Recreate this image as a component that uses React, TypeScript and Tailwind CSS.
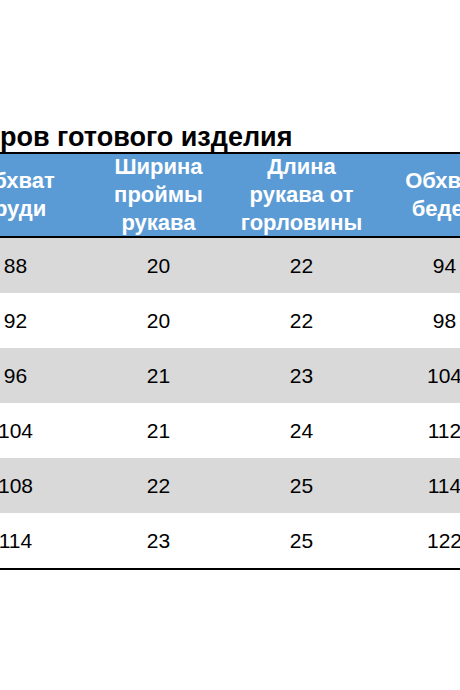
const header = [
  ["Обхват", "груди"],
  ["Ширина", "проймы", "рукава"],
  ["Длина", "рукава от", "горловины"],
  ["Обхват", "бедер"],
];

const rows = [
  ["88", "20", "22", "94"],
  ["92", "20", "22", "98"],
  ["96", "21", "23", "104"],
  ["104", "21", "24", "112"],
  ["108", "22", "25", "114"],
  ["114", "23", "25", "122"],
];

export default function App() {
  return (
    <div className="w-[460px] h-[690px] overflow-hidden bg-white pt-[124px] font-['Liberation_Sans',Arial,sans-serif] text-black">
      <div className="h-[27px] text-[27px] leading-[27px] font-bold whitespace-nowrap">
        ров готового изделия
      </div>
      <div className="mt-[1px] ml-[-56px] w-[572px] border-t-2 border-b-2 border-black">
        <div className="flex h-[84px] bg-[#5b9bd5] border-b-2 border-black">
          {header.map((lines, i) => (
            <div
              key={i}
              className="w-[143px] shrink-0 flex flex-col items-center justify-center text-white font-bold text-[22px] leading-[28px] whitespace-nowrap"
            >
              {lines.map((l, j) => (
                <span key={j}>{l}</span>
              ))}
            </div>
          ))}
        </div>
        {rows.map((r, i) => (
          <div
            key={i}
            className={`flex h-[55px] ${i % 2 === 0 ? "bg-[#d9d9d9]" : "bg-white"}`}
          >
            {r.map((v, j) => (
              <div
                key={j}
                className="w-[143px] shrink-0 flex items-center justify-center text-[21px] leading-[55px]"
              >
                {v}
              </div>
            ))}
          </div>
        ))}
      </div>
    </div>
  );
}
